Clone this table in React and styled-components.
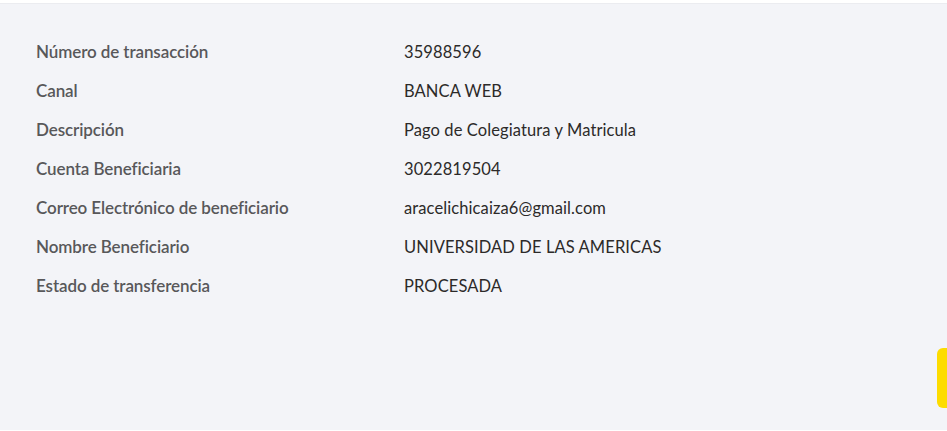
import styled, { createGlobalStyle } from 'styled-components';

const Global = createGlobalStyle`
  html, body { margin: 0; padding: 0; background: #fff; }
  body { font-family: Lato, "Open Sans", sans-serif; }
`;

const Page = styled.div`
  padding-top: 3px;
  background: #fff;
`;

const Panel = styled.section`
  position: relative;
  background: #f3f4f8;
  border-top: 1px solid #ebecf0;
  height: 427px;
  box-sizing: border-box;
  padding: 28px 36px 0;
`;

const Row = styled.div`
  display: grid;
  grid-template-columns: 368px 1fr;
  height: 39px;
  align-items: center;
`;

const Label = styled.span`
  color: #58585a;
  font-size: 17px;
  font-weight: 600;
  letter-spacing: -0.1px;
`;

const Value = styled.span`
  color: #2c2a29;
  font-size: 16.5px;
  letter-spacing: 0.1px;
`;

const Tab = styled.div`
  position: absolute;
  right: 0;
  top: 344px;
  width: 10px;
  height: 60px;
  background: #fddc00;
  border-radius: 6px 0 0 6px;
`;

const rows = [
  ['Número de transacción', '35988596'],
  ['Canal', 'BANCA WEB'],
  ['Descripción', 'Pago de Colegiatura y Matricula'],
  ['Cuenta Beneficiaria', '3022819504'],
  ['Correo Electrónico de beneficiario', 'aracelichicaiza6@gmail.com'],
  ['Nombre Beneficiario', 'UNIVERSIDAD DE LAS AMERICAS'],
  ['Estado de transferencia', 'PROCESADA'],
];

export default function App() {
  return (
    <Page>
      <Global />
      <Panel>
        {rows.map(([label, value]) => (
          <Row key={label}>
            <Label>{label}</Label>
            <Value>{value}</Value>
          </Row>
        ))}
        <Tab />
      </Panel>
    </Page>
  );
}
